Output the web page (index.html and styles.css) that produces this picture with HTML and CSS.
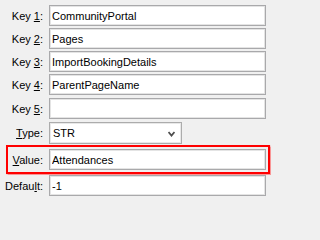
FILE: index.html
```html
<!DOCTYPE html>
<html>
<head>
<meta charset="utf-8">
<link rel="stylesheet" href="styles.css">
</head>
<body>
<div class="form">
  <div class="row"><label class="lbl">Key <u>1</u>:</label><input class="field" value="CommunityPortal"></div>
  <div class="row"><label class="lbl">Key <u>2</u>:</label><input class="field" value="Pages"></div>
  <div class="row"><label class="lbl">Key <u>3</u>:</label><input class="field" value="ImportBookingDetails"></div>
  <div class="row"><label class="lbl">Key <u>4</u>:</label><input class="field" value="ParentPageName"></div>
  <div class="row gap3"><label class="lbl">Key <u>5</u>:</label><input class="field" value=""></div>
  <div class="row gap3"><label class="lbl"><u>T</u>ype:</label>
    <div class="select"><span>STR</span>
      <svg class="chev" width="7" height="6" viewBox="0 0 7 6"><path d="M0.5 1 L3.5 4.5 L6.5 1" fill="none" stroke="#4d4d4d" stroke-width="1.8"/></svg>
    </div>
  </div>
  <div class="row highlight"><label class="lbl"><u>V</u>alue:</label><input class="field" value="Attendances"></div>
  <div class="row gap1"><label class="lbl">Defau<u>l</u>t:</label><input class="field" value="-1"></div>
</div>
</body>
</html>
```

FILE: styles.css
```css
html, body {
  margin: 0;
  padding: 0;
  background: #f0f0f0;
}
body {
  font-family: "Liberation Sans", Arial, sans-serif;
  font-size: 11px;
  color: #000;
}
.form {
  display: flex;
  flex-direction: column;
  padding-top: 5px;
  width: 271px;
}
.row {
  display: flex;
  align-items: center;
  margin-top: 2px;
}
.row:first-child { margin-top: 0; }
.row.gap3 { margin-top: 3px; }
.row.gap1 { margin-top: 1px; }
.lbl {
  width: 44px;
  box-sizing: border-box;
  padding-right: 1px;
  text-align: right;
  flex: none;
  margin-right: 5px;
  white-space: nowrap;
}
.field {
  box-sizing: border-box;
  width: 217px;
  height: 21px;
  margin: 0;
  padding: 0 2px;
  border: 1px solid #a9a9ab;
  box-shadow: inset 0 0 0 1px #e4e4e4;
  background: #fff;
  font-family: "Liberation Sans", Arial, sans-serif;
  font-size: 11px;
  color: #000;
  outline: none;
}
.select {
  box-sizing: border-box;
  width: 133px;
  height: 22px;
  border: 1px solid #acacac;
  box-shadow: inset 0 0 0 1px #e8e8e8;
  background: #fff;
  display: flex;
  align-items: center;
  justify-content: space-between;
  padding: 0 6px 0 3px;
}
.chev { display: block; margin-top: 1px; }
.highlight {
  margin-top: 1px;
  margin-left: 6px;
  width: 264px;
  box-sizing: border-box;
  border: 2px solid #ff0000;
  box-shadow: 0 0 1px 0.5px rgba(255, 90, 90, 0.6);
  padding: 2px 2px 2px 0;
}
.highlight .lbl {
  width: 36px;
}
```
